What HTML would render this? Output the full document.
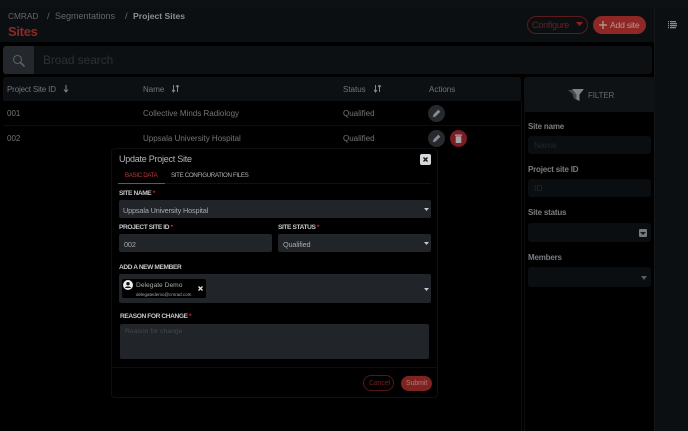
<!DOCTYPE html>
<html><head><meta charset="utf-8"><style>
*{box-sizing:border-box;margin:0;padding:0}
html,body{width:688px;height:431px;overflow:hidden;background:#000}
body{font-family:"Liberation Sans",sans-serif;position:relative}
#r{position:absolute;left:0;top:0;width:688px;height:431px;filter:blur(.3px)}
.a{position:absolute;white-space:nowrap}
.b{position:absolute}
.t{font-size:8px;color:#727577;line-height:12px}
.l{font-size:6.600px;font-weight:bold;color:#c4c6c8;line-height:10px;letter-spacing:-.4px}
.l i{color:#d6232a;font-style:normal}
.f{position:absolute;background:#212429;border-radius:2px}
.fl{font-size:8px;color:#7a7d80;font-weight:bold;line-height:12px;letter-spacing:-.2px}
.ff{position:absolute;left:528px;width:123px;background:#0b0e11;border-radius:3px}
.v{font-size:7.300px;line-height:11px;color:#a8aaac;letter-spacing:-.15px}
svg{position:absolute;display:block}
</style></head><body><div id="r">
<div class="b" style="left:0;top:0;width:688px;height:431px;background:#000"></div>
<div class="b" style="left:0;top:0;width:655px;height:42px;background:#0b0f12"></div>
<div class="b" style="left:655px;top:0;width:33px;height:431px;background:#0b0f12"></div>
<div class="b" style="left:0;top:0;width:688px;height:8px;background:#0d1114"></div>
<div class="b" style="left:654px;top:8px;width:1px;height:423px;background:#14181b"></div>

<div class="a" style="left:8px;top:9.500px;font-size:8.300px;line-height:13px;color:#63676a">CMRAD</div>
<div class="a" style="left:47px;top:9.500px;font-size:9.500px;line-height:13px;color:#63676a">/</div>
<div class="a" style="left:55px;top:9.500px;font-size:9px;line-height:13px;color:#63676a">Segmentations</div>
<div class="a" style="left:125px;top:9.500px;font-size:9.500px;line-height:13px;color:#63676a">/</div>
<div class="a" style="left:133px;top:9.500px;font-size:8.600px;line-height:13px;color:#8b8e90;font-weight:bold">Project Sites</div>
<div class="a" style="left:8px;top:23px;font-size:13px;line-height:18px;color:#8a2a26;font-weight:bold;letter-spacing:-.3px">Sites</div>

<div class="b" style="left:527px;top:16px;width:61px;height:18px;border:1px solid #5c1a1a;border-radius:9px"></div>
<div class="a" style="left:532px;top:18.500px;font-size:9px;line-height:13px;color:#6e1f1f;letter-spacing:-.2px">Configure</div>
<svg style="left:575px;top:22px" width="9" height="5"><path d="M1 0h7L4.500 4z" fill="#8a2323"/></svg>
<div class="b" style="left:593px;top:16px;width:53px;height:18px;background:#8e2824;border-radius:9px"></div>
<svg style="left:598px;top:20px" width="10" height="10"><path d="M5 1v8M1 5h8" stroke="#c09a98" stroke-width="1.200"/></svg>
<div class="a" style="left:610px;top:18.500px;font-size:8.600px;line-height:13px;color:#c09593;letter-spacing:-.2px">Add site</div>
<svg style="left:668px;top:21px" width="9" height="8"><path d="M0 .7h1M2 .7h6M0 2.700h1M2 2.700h7M0 4.700h1M2 4.700h7M0 6.700h1M2 6.700h6" stroke="#9a9c9e" stroke-width="1.100"/></svg>

<div class="b" style="left:3px;top:46px;width:649px;height:28px;background:#0d1013;border-radius:3px"></div>
<div class="b" style="left:3px;top:46px;width:31px;height:28px;background:#24282c;border-radius:3px 0 0 3px"></div>
<svg style="left:12px;top:54px" width="14" height="14"><circle cx="5.500" cy="5.500" r="4" fill="none" stroke="#5e6163" stroke-width="1.100"/><path d="M8.500 8.500l4 4" stroke="#5e6163" stroke-width="1.600"/></svg>
<div class="a" style="left:43px;top:52px;font-size:11.800px;line-height:16px;color:#2d3135">Broad search</div>

<div class="b" style="left:3px;top:77px;width:518px;height:24px;background:#0d1013;border-radius:3px 3px 0 0"></div>
<div class="b" style="left:3px;top:125px;width:518px;height:1px;background:#0c0e10"></div>
<div class="b" style="left:521px;top:101px;width:1px;height:330px;background:#0c0f11"></div>
<div class="a t" style="left:7px;top:84px;letter-spacing:-.15px">Project Site ID</div>
<svg style="left:62px;top:85px" width="8" height="8"><path d="M4 0v6M2 4.500l2 2.500 2-2.500" stroke="#85888a" fill="none" stroke-width="1"/></svg>
<div class="a t" style="left:143px;top:84px">Name</div>
<svg style="left:171px;top:85px" width="9" height="8"><path d="M2.500 0v7M1 5l1.500 2L4 5M6.500 7V0M5 2l1.500-2L8 2" stroke="#85888a" fill="none" stroke-width="1"/></svg>
<div class="a t" style="left:343px;top:84px">Status</div>
<svg style="left:373px;top:85px" width="9" height="8"><path d="M2.500 0v7M1 5l1.500 2L4 5M6.500 7V0M5 2l1.500-2L8 2" stroke="#85888a" fill="none" stroke-width="1"/></svg>
<div class="a t" style="left:429px;top:84px">Actions</div>

<div class="a t" style="left:7px;top:108px">001</div>
<div class="a t" style="left:143px;top:108px">Collective Minds Radiology</div>
<div class="a t" style="left:343px;top:108px">Qualified</div>
<div class="b" style="left:428px;top:105px;width:17px;height:17px;border-radius:50%;background:#26292d"></div>
<svg style="left:432px;top:109px" width="9" height="9"><path d="M1.200 7.800l.6-2.200L6.300 1.100l1.600 1.600L3.400 7.200z" fill="#8a8c8e" stroke="#8a8c8e" stroke-width=".6"/></svg>

<div class="a t" style="left:7px;top:133px">002</div>
<div class="a t" style="left:143px;top:133px">Uppsala University Hospital</div>
<div class="a t" style="left:343px;top:133px">Qualified</div>
<div class="b" style="left:428px;top:130px;width:17px;height:17px;border-radius:50%;background:#26292d"></div>
<svg style="left:432px;top:134px" width="9" height="9"><path d="M1.200 7.800l.6-2.200L6.300 1.100l1.600 1.600L3.400 7.200z" fill="#8a8c8e" stroke="#8a8c8e" stroke-width=".6"/></svg>
<div class="b" style="left:450px;top:130px;width:17px;height:17px;border-radius:50%;background:#7c1a26"></div>
<svg style="left:455px;top:134px" width="7" height="9"><path d="M0 .5h7v1.200H0zM.7 2.200h5.600V9H.7z" fill="#a9a3a5"/></svg>

<div class="b" style="left:524px;top:77px;width:131px;height:35px;background:#0e1215;border-radius:3px 3px 0 0"></div>
<div class="b" style="left:524px;top:112px;width:1px;height:319px;background:#0c0f11"></div>
<svg style="left:568px;top:89px" width="16" height="12"><path d="M0 1h6l3 5v5L6 9.500 4.500 5z" fill="#45484a"/><path d="M4 0h12l-4.500 5.500V12L8.500 10.500V5.500z" fill="#808385"/></svg>
<div class="a" style="left:588px;top:90px;font-size:7.800px;line-height:12px;color:#696c6f">FILTER</div>

<div class="a fl" style="left:528px;top:121px">Site name</div>
<div class="ff" style="top:136px;height:18px"></div>
<div class="a" style="left:534px;top:140px;font-size:8.500px;line-height:11px;color:#232629">Name</div>
<div class="a fl" style="left:528px;top:164px">Project site ID</div>
<div class="ff" style="top:179px;height:18px"></div>
<div class="a" style="left:534px;top:183px;font-size:8.500px;line-height:11px;color:#232629">ID</div>
<div class="a fl" style="left:528px;top:207px">Site status</div>
<div class="ff" style="top:223px;height:19px"></div>
<div class="b" style="left:639px;top:229px;width:8px;height:8px;background:#77797b;border-radius:1px"></div>
<svg style="left:640px;top:232px" width="6" height="3"><path d="M0 0h6L3 3z" fill="#151719"/></svg>
<div class="a fl" style="left:528px;top:252px">Members</div>
<div class="ff" style="top:267px;height:20px"></div>
<svg style="left:641px;top:276px" width="6" height="4"><path d="M0 0h6L3 4z" fill="#595c5e"/></svg>

<!-- modal -->
<div class="b" style="left:111px;top:148px;width:327px;height:250px;background:#000;border:1px solid #0d1012;border-radius:4px"></div>
<div class="a" style="left:119px;top:152px;font-size:9px;line-height:14px;color:#b4b6b8;letter-spacing:-.25px">Update Project Site</div>
<div class="b" style="left:420px;top:154px;width:11px;height:11px;background:#d6d8da;border-radius:2px"></div>
<svg style="left:423px;top:157px" width="5" height="5"><path d="M.5.5l4 4M4.500.5l-4 4" stroke="#111" stroke-width="1.300"/></svg>
<div class="a" style="left:125px;top:171px;font-size:6.200px;line-height:10px;color:#c23530;letter-spacing:-.35px">BASIC DATA</div>
<div class="a" style="left:171px;top:171px;font-size:6.200px;line-height:10px;color:#b0b2b4;letter-spacing:-.35px">SITE CONFIGURATION FILES</div>
<div class="b" style="left:118px;top:183px;width:313px;height:1px;background:#0f1113"></div>
<div class="b" style="left:118px;top:183px;width:47px;height:1px;background:#c2302c"></div>

<div class="a l" style="left:119px;top:188.500px">SITE NAME <i>*</i></div>
<div class="f" style="left:119px;top:200px;width:312px;height:18px"></div>
<div class="a v" style="left:123px;top:204.500px">Uppsala University Hospital</div>
<svg style="left:424px;top:208px" width="5" height="3"><path d="M0 0h5L2.500 3z" fill="#c5c7c9"/></svg>

<div class="a l" style="left:119px;top:222.500px">PROJECT SITE ID <i>*</i></div>
<div class="f" style="left:119px;top:234px;width:153px;height:18px"></div>
<div class="a v" style="left:124px;top:238.500px">002</div>
<div class="a l" style="left:278px;top:222.500px">SITE STATUS <i>*</i></div>
<div class="f" style="left:278px;top:234px;width:153px;height:18px"></div>
<div class="a v" style="left:283px;top:238.500px">Qualified</div>
<svg style="left:424px;top:242px" width="5" height="3"><path d="M0 0h5L2.500 3z" fill="#c5c7c9"/></svg>

<div class="a l" style="left:119px;top:263px">ADD A NEW MEMBER</div>
<div class="f" style="left:119px;top:274px;width:312px;height:29px"></div>
<div class="b" style="left:122px;top:279px;width:84px;height:19px;background:#000;border-radius:2px"></div>
<svg style="left:123px;top:280px" width="10" height="10"><circle cx="5" cy="5" r="5" fill="#eceded"/><circle cx="5" cy="3.700" r="1.700" fill="#111"/><path d="M2 8c0-2 6-2 6 0z" fill="#111"/></svg>
<div class="a" style="left:136px;top:281px;font-size:6.700px;line-height:10px;color:#a6a8aa">Delegate Demo</div>
<div class="a" style="left:136px;top:290.500px;font-size:4.500px;line-height:7px;color:#a6a8aa">delegatedemo@cmrad.com</div>
<svg style="left:198px;top:286px" width="5" height="5"><path d="M.5.5l4 4M4.500.5l-4 4" stroke="#e4e5e6" stroke-width="1.300"/></svg>
<svg style="left:424px;top:288px" width="5" height="3"><path d="M0 0h5L2.500 3z" fill="#c5c7c9"/></svg>

<div class="a l" style="left:120px;top:312px">REASON FOR CHANGE <i>*</i></div>
<div class="f" style="left:120px;top:324px;width:309px;height:35px"></div>
<div class="a" style="left:125px;top:327px;font-size:6.800px;line-height:10px;color:#44484c">Reason for change</div>

<div class="b" style="left:112px;top:367px;width:325px;height:1px;background:#0c0e10"></div>
<div class="b" style="left:363px;top:375px;width:31px;height:16px;border:1px solid #541717;border-radius:8px"></div>
<div class="a" style="left:369px;top:379px;font-size:7px;line-height:10px;color:#7a1f1d;letter-spacing:-.15px">Cancel</div>
<div class="b" style="left:401px;top:376px;width:31px;height:15px;background:#7e231f;border-radius:8px"></div>
<div class="a" style="left:406px;top:379px;font-size:7px;line-height:10px;color:#b07c79;letter-spacing:-.1px">Submit</div>
</div></body></html>
